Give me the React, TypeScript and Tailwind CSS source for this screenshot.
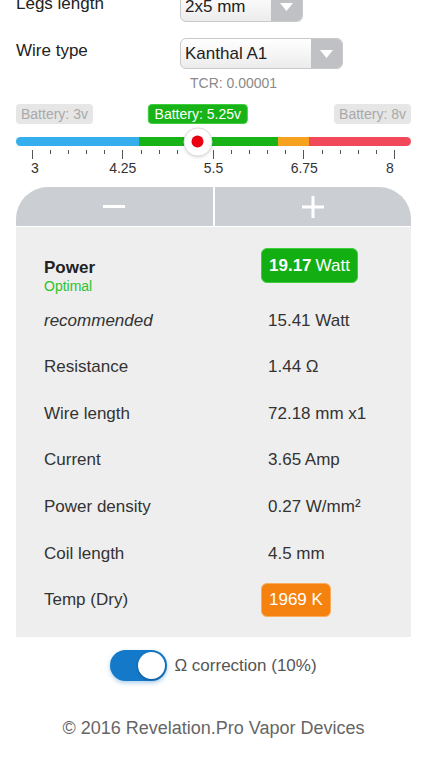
import React, { FC } from "react";

const font = { fontFamily: '"Liberation Sans", Arial, sans-serif' };

interface SelectBoxProps {
  value: string;
  width: string;
}

const SelectBox: FC<SelectBoxProps> = ({ value, width }) => (
  <div className={`flex h-[31px] ${width} overflow-hidden rounded-[6px] border border-[#c9c9c9] bg-gradient-to-b from-white to-[#ececec]`}>
    <div className="flex flex-1 items-center pl-[4px] text-[17px] text-[#222]">{value}</div>
    <div className="flex w-[31px] items-center justify-center bg-[#bfc1c4]">
      <svg width="13" height="8" viewBox="0 0 13 8">
        <path d="M0 0 L13 0 L6.5 8 Z" fill="#fff" />
      </svg>
    </div>
  </div>
);

const rows: { label: string; value: string; italic?: boolean }[] = [
  { label: "recommended", value: "15.41 Watt", italic: true },
  { label: "Resistance", value: "1.44 Ω" },
  { label: "Wire length", value: "72.18 mm x1" },
  { label: "Current", value: "3.65 Amp" },
  { label: "Power density", value: "0.27 W/mm²" },
  { label: "Coil length", value: "4.5 mm" },
];

const ticks = Array.from({ length: 21 }, (_, i) => i);
const tickLabels = [
  { l: "3", cls: "translate-x-[3px]" },
  { l: "4.25", cls: "" },
  { l: "5.5", cls: "" },
  { l: "6.75", cls: "" },
  { l: "8", cls: "-translate-x-[5px]" },
];

const App: FC = () => {
  const battery = 5.25;
  const pct = ((battery - 3) / 5) * 100;
  const left = `calc(18px + ${pct} * 3.64px)`;

  return (
    <div style={font} className="min-h-[759px] w-[427px] overflow-hidden bg-white text-[#333]">
      <div className="-mt-[9px] px-4">
        {/* settings */}
        <div className="flex items-center">
          <div className="w-[164px] -translate-y-[3px] text-[17px] text-[#222]">Legs length</div>
          <SelectBox value="2x5 mm" width="w-[123px]" />
        </div>
        <div className="mt-[16px] flex items-center">
          <div className="w-[164px] -translate-y-[3px] text-[17px] text-[#222]">Wire type</div>
          <SelectBox value="Kanthal A1" width="w-[163px]" />
        </div>
        <div className="mt-[6px] pl-[174px] text-[14px] leading-[16px] text-[#8a8a8a]">TCR: 0.00001</div>

        {/* battery slider */}
        <div className="relative mt-[13px] flex justify-between">
          <span className="rounded-[4px] bg-[#e6e6e6] px-[5px] text-[14px] leading-[20px] text-[#a9a9a9]">Battery: 3v</span>
          <span
            className="absolute top-0 -translate-x-1/2 rounded-[4px] border border-[#3fcd3f] bg-[#17b317] px-[6px] text-[14px] leading-[18px] text-white"
            style={{ left }}
          >
            Battery: 5.25v
          </span>
          <span className="rounded-[4px] bg-[#e6e6e6] px-[5px] text-[14px] leading-[20px] text-[#a9a9a9]">Battery: 8v</span>
        </div>

        <div className="relative mt-[13px]">
          <div className="flex h-[9px] overflow-hidden rounded-full">
            <div className="w-[123px] bg-[#35aeee]" />
            <div className="w-[139px] bg-[#17b317]" />
            <div className="w-[31px] bg-[#f6a21e]" />
            <div className="flex-1 bg-[#f2495a]" />
          </div>
          <div
            className="absolute top-1/2 flex h-[29px] w-[29px] -translate-x-1/2 -translate-y-1/2 items-center justify-center rounded-full border border-[#dedede] bg-white shadow-[0_1px_3px_rgba(0,0,0,0.15)]"
            style={{ left }}
          >
            <div className="h-[12px] w-[12px] rounded-full bg-[#ea0010]" />
          </div>
        </div>

        <div className="mx-4 mt-[4px] flex items-start justify-between">
          {ticks.map((t) => (
            <div key={t} className={`w-px bg-[#555] ${t % 5 === 0 ? "h-[9px]" : "h-[4px]"}`} />
          ))}
        </div>
        <div className="mx-4 mt-px flex justify-between">
          {tickLabels.map(({ l, cls }) => (
            <div key={l} className={`flex w-0 justify-center ${cls}`}>
              <span className="text-[14px] leading-[16px] text-[#333]">{l}</span>
            </div>
          ))}
        </div>

        {/* +/- buttons */}
        <div className="mt-[11px] flex h-[39px] gap-[2px] overflow-hidden rounded-t-[32px]">
          <button className="flex flex-1 items-center justify-center bg-[#cbced2]">
            <div className="h-[3px] w-[22px] bg-white" />
          </button>
          <button className="flex flex-1 items-center justify-center bg-[#cbced2]">
            <svg width="22" height="22" viewBox="0 0 22 22">
              <rect x="0" y="9.5" width="22" height="3" fill="#fff" />
              <rect x="9.5" y="0" width="3" height="22" fill="#fff" />
            </svg>
          </button>
        </div>

        {/* results */}
        <div className="mt-px bg-[#eeeeee] pb-[14px] pl-[28px] pt-[22px]">
          <div className="flex h-[48px] items-start">
            <div className="w-[217px] pt-[9px]">
              <div className="text-[17px] font-bold leading-[20px] text-[#222]">Power</div>
              <div className="text-[14px] leading-[17px] text-[#2cc22c]">Optimal</div>
            </div>
            <div className="-mt-px flex h-[35px] items-center rounded-[6px] border border-[#3bd03b] bg-[#12ae12] px-[7px] text-[17px] text-white">
              <span className="font-bold">19.17</span>
              <span className="ml-[4px]">Watt</span>
            </div>
          </div>
          {rows.map((r) => (
            <div key={r.label} className="flex h-[46.6px] items-center text-[17px]">
              <div className={`w-[217px] text-[#333] ${r.italic ? "italic" : ""}`}>{r.label}</div>
              <div className="pl-[7px] text-[#333]">{r.value}</div>
            </div>
          ))}
          <div className="flex h-[46.6px] items-center text-[17px]">
            <div className="w-[217px] text-[#333]">Temp (Dry)</div>
            <div className="flex h-[34px] items-center rounded-[6px] border border-[#f9ad5c] bg-[#f5820f] px-[7px] text-white">
              1969 K
            </div>
          </div>
        </div>

        {/* ohm correction */}
        <div className="mt-[13px] flex items-center justify-center gap-[7px]">
          <div className="flex h-[31px] w-[57px] items-center justify-end rounded-full bg-[#1479c9] p-[2px] shadow-[0_2px_4px_rgba(20,121,201,0.35)]">
            <div className="h-[27px] w-[27px] rounded-full bg-white shadow-[0_1px_3px_rgba(0,0,0,0.3)]" />
          </div>
          <span className="text-[17px] text-[#555]">Ω correction (10%)</span>
        </div>

        <div className="mt-[34px] text-center text-[18px] text-[#666]">© 2016 Revelation.Pro Vapor Devices</div>
      </div>
    </div>
  );
};

export default App;
